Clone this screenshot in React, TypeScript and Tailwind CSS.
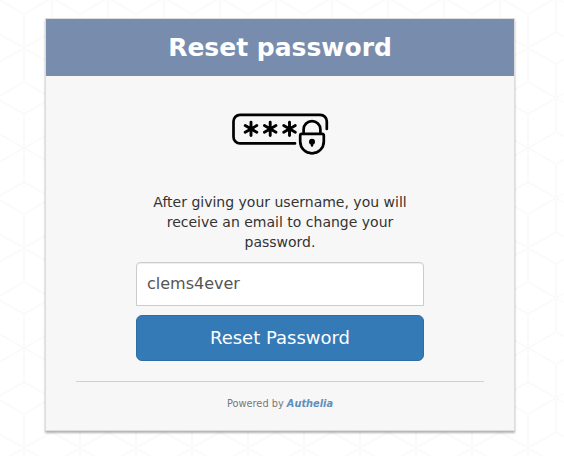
import React from "react";

function CubePattern() {
  return (
    <svg className="absolute inset-0 h-full w-full" aria-hidden="true">
      <defs>
        <pattern id="cubes" width="56" height="100" patternUnits="userSpaceOnUse" patternTransform="translate(-4 -52)">
          <path
            d="M28 66L0 50V16L28 0L56 16V50L28 66V100M28 0V34L0 50V84L28 100L56 84V50L28 34"
            fill="none"
            stroke="#fafafa"
            strokeWidth="1.8"
          />
        </pattern>
      </defs>
      <rect width="100%" height="100%" fill="url(#cubes)" />
    </svg>
  );
}

function Asterisk({ x }: { x: number }) {
  return <path d={`M${x} 22.3V35.5M${x - 5.8} 25.6L${x + 5.8} 32.2M${x + 5.8} 25.6L${x - 5.8} 32.2`} strokeWidth="2.9" />;
}

function PasswordIcon() {
  return (
    <svg
      className="block h-[65px] w-[120px]"
      viewBox="0 0 120 65"
      fill="none"
      stroke="#000"
      strokeWidth="2.7"
      strokeLinecap="round"
      strokeLinejoin="round"
    >
      <path d="M75 43.4H20a6.5 6.5 0 0 1-6.5-6.5V21.3A6.5 6.5 0 0 1 20 14.8H100.3a6.5 6.5 0 0 1 6.5 6.5V29" />
      <Asterisk x={31} />
      <Asterisk x={50.2} />
      <Asterisk x={69.5} />
      <path d="M83.6 33V29.5a8.4 8.4 0 0 1 16.8 0V33" />
      <path d="M81.8 33.8H102.2a1.6 1.6 0 0 1 1.6 1.6V41.5a11.8 11.8 0 0 1-23.6 0V35.4a1.6 1.6 0 0 1 1.6-1.6Z" />
      <circle cx="92" cy="41.8" r="3" fill="#000" stroke="none" />
      <path d="M92 42V45.6" strokeWidth="2.4" />
    </svg>
  );
}

export default function App() {
  return (
    <main className="relative h-[456px] w-[564px] overflow-hidden bg-white pt-[18px] pl-[45px] font-['DejaVu_Sans',sans-serif]">
      <CubePattern />
      <section className="relative flex h-[413px] w-[470px] flex-col border border-[#dddddd] bg-[#f7f7f7] shadow-[0_2px_2px_rgba(0,0,0,0.3)]">
        <header className="flex h-[57px] shrink-0 items-center justify-center bg-[#788dad]">
          <h1 className="text-[25px] leading-[26px] font-bold text-white">Reset password</h1>
        </header>
        <div className="flex flex-col items-center pt-6">
          <PasswordIcon />
          <form className="mt-[27px] flex w-72 flex-col" onSubmit={(e) => e.preventDefault()}>
            <p className="px-2 text-center text-[14px] leading-5 text-[#333333]">
              After giving your username, you will receive an email to change your password.
            </p>
            <input
              className="mt-[10px] h-11 rounded-t border border-[#cccccc] bg-white px-[10px] pb-[2px] text-[16px] text-[#555555] shadow-[inset_0_1px_1px_rgba(0,0,0,0.075)] outline-none"
              aria-label="Username"
              defaultValue="clems4ever"
            />
            <button className="mt-[9px] h-[46px] rounded-md border border-[#2e6da4] bg-[#337ab7] text-[18px] leading-6 text-white">
              Reset Password
            </button>
          </form>
        </div>
        <footer className="mx-[30px] mt-5 border-t border-[#d0d0d0] pt-[15px] text-center text-[9.8px] leading-[14px] text-[#777777]">
          Powered by <a className="font-bold text-[#5f8fbc] italic">Authelia</a>
        </footer>
      </section>
    </main>
  );
}
